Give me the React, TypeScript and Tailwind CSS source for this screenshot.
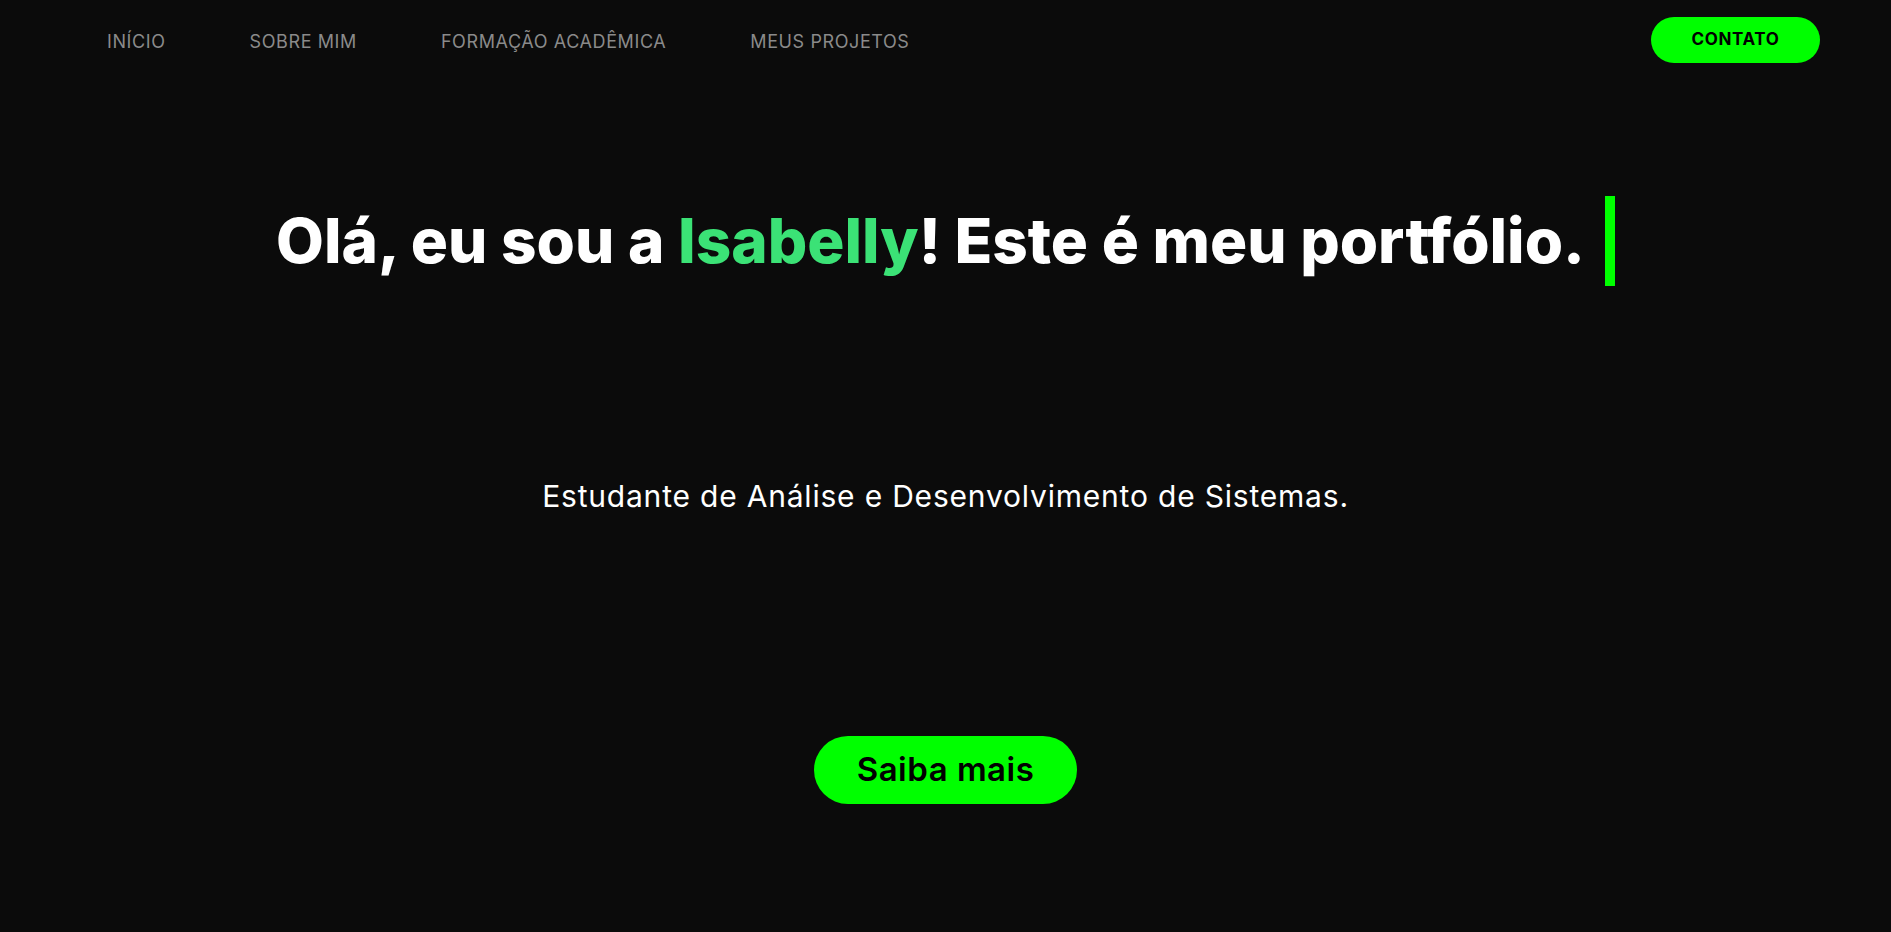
import React from "react";

const links = ["INÍCIO", "SOBRE MIM", "FORMAÇÃO ACADÊMICA", "MEUS PROJETOS"];

const Navbar = () => {
  return (
    <nav className="flex items-center justify-between pt-[17px] pl-[107px] pr-[71px]">
      <ul className="mt-[3px] flex items-center gap-[84px] text-[18px] tracking-[0.6px] text-[#8a8a8a]">
        {links.map((l) => (
          <li key={l}>
            <a href="#">{l}</a>
          </li>
        ))}
      </ul>
      <button className="h-[46px] w-[169px] rounded-full bg-[#00ff00] text-[17px] font-bold tracking-[0.6px] text-black">
        CONTATO
      </button>
    </nav>
  );
};

export default function App() {
  return (
    <div
      className="h-[932px] w-full overflow-hidden bg-[#0b0b0b]"
      style={{ fontFamily: "Inter, 'Noto Sans', sans-serif" }}
    >
      <Navbar />

      <section className="flex flex-col items-center">
        <div className="mt-[133px] flex h-[90px] items-center">
          <h1 className="text-[62px] font-extrabold leading-[90px] text-white">
            Olá, eu sou a <span className="text-[#3be276]">Isabelly</span>! Este é meu portfólio.
          </h1>
          <span className="ml-[20px] h-[90px] w-[10px] bg-[#00ff00]" />
        </div>

        <p className="mt-[193px] text-[30px] leading-[34px] tracking-[0.8px] text-white">
          Estudante de Análise e Desenvolvimento de Sistemas.
        </p>

        <button className="mt-[223px] h-[68px] w-[263px] rounded-[34px] bg-[#00ff00] text-[33px] font-semibold tracking-[0.5px] text-black">
          Saiba mais
        </button>
      </section>
    </div>
  );
}
